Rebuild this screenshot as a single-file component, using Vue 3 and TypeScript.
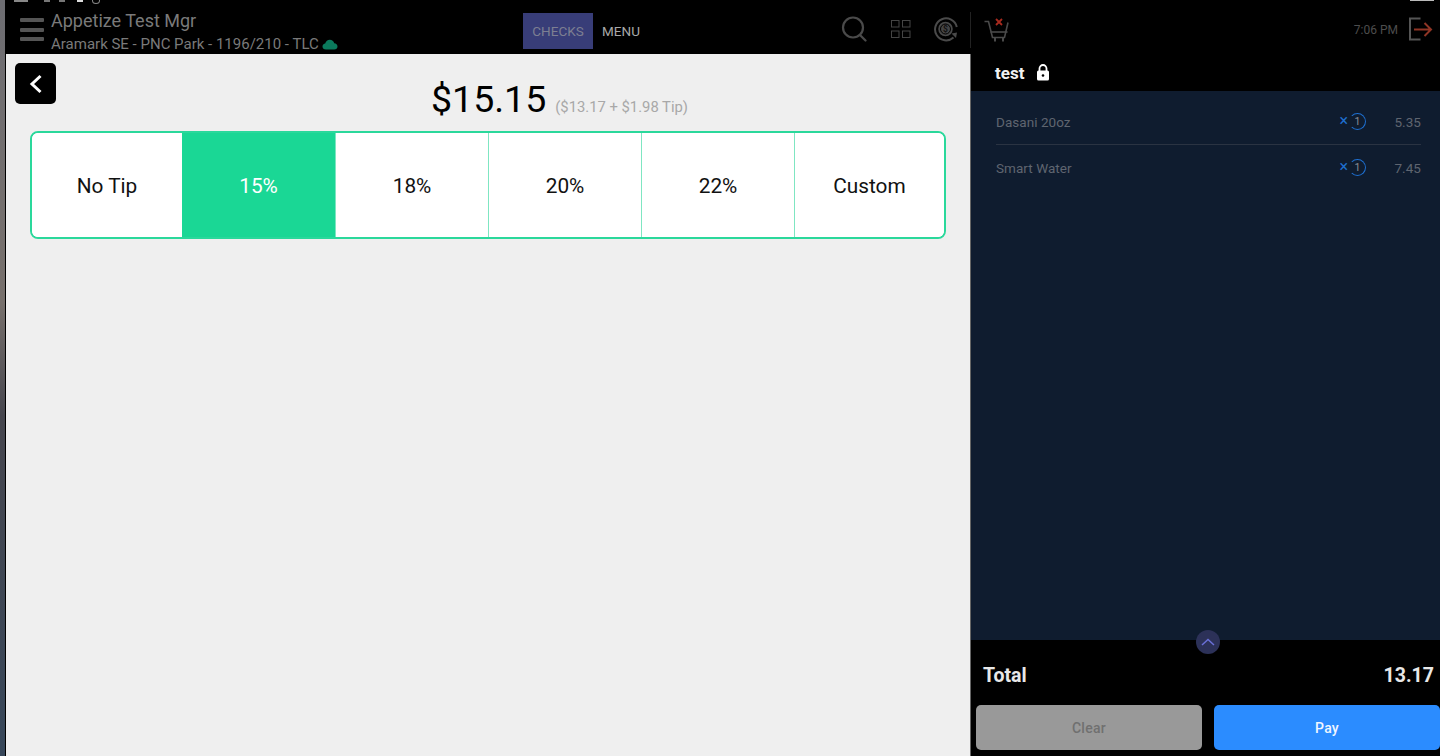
<script setup lang="ts">
const tips = ['No Tip', '15%', '18%', '20%', '22%', 'Custom']
const selectedTip = '15%'
const items = [
  { name: 'Dasani 20oz', qty: 1, price: '5.35' },
  { name: 'Smart Water', qty: 1, price: '7.45' }
]
</script>

<template>
  <div class="screen">
    <div class="wallpaper"></div>
    <div class="main">
      <header class="topbar">
        <div class="status-icons">
          <span class="dot clock"></span><span class="dot"></span><span class="dot"></span><span class="dot bright"></span><span class="dot ring"></span>
        </div>
        <div class="burger"><span></span><span></span><span></span></div>
        <div class="titles">
          <div class="title">Appetize Test Mgr</div>
          <div class="subtitle">
            Aramark SE - PNC Park - 1196/210 - TLC
            <svg class="cloud" width="16" height="11" viewBox="0 0 16 11">
              <path d="M4 10.5C1.8 10.5 0.5 9 0.5 7.4 0.5 5.8 1.7 4.6 3.2 4.5 3.8 2.2 5.6 0.8 7.8 0.8c2.2 0 3.9 1.4 4.4 3.4 1.9 0.1 3.3 1.5 3.3 3.2 0 1.7-1.4 3.1-3.3 3.1z" fill="#0b7a5c" />
            </svg>
          </div>
        </div>
        <nav class="tabs">
          <button class="tab tab-active">CHECKS</button>
          <button class="tab">MENU</button>
        </nav>
        <div class="tools">
          <svg width="26" height="26" viewBox="0 0 26 26" fill="none" stroke="#4a4a4a" stroke-width="2.2">
            <circle cx="12" cy="11.5" r="10" />
            <path d="M19 19l5.5 5.5" stroke-linecap="round" />
          </svg>
          <svg class="grid-icon" width="20" height="20" viewBox="0 0 20 20" fill="none" stroke="#444" stroke-width="1">
            <rect x="0.5" y="1.5" width="7.5" height="6.5" />
            <rect x="11.5" y="1.5" width="7.5" height="6.5" />
            <rect x="0.5" y="12" width="7.5" height="6.5" />
            <rect x="11.5" y="12" width="7.5" height="6.5" />
          </svg>
          <svg class="coin-icon" width="26" height="26" viewBox="0 0 26 26" fill="none">
            <path d="M20.5 21.5A11 11 0 1 1 23.8 11" stroke="#4a4a4a" stroke-width="2" />
            <circle cx="12.5" cy="13" r="6.5" fill="#444" stroke="#4a4a4a" stroke-width="1.5" />
            <circle cx="12.5" cy="13" r="5" stroke="#000" stroke-width="1" />
            <text x="12.5" y="16" text-anchor="middle" font-size="8.5" font-weight="700" fill="#111">$</text>
            <path d="M18.5 17.5l5.5-1-1 5.5z" fill="#4a4a4a" />
          </svg>
        </div>
      </header>

      <section class="content">
        <button class="back" aria-label="Back">
          <svg width="14" height="20" viewBox="0 0 14 20" fill="none" stroke="#fff" stroke-width="3">
            <path d="M11.5 2L3 10l8.5 8" />
          </svg>
        </button>
        <div class="amount">
          <span class="amount-total">$15.15</span>
          <span class="amount-detail">($13.17 + $1.98 Tip)</span>
        </div>
        <div class="tip-bar">
          <button
            v-for="tip in tips"
            :key="tip"
            :class="['tip', { 'tip-active': tip === selectedTip }]"
          >
            {{ tip }}
          </button>
        </div>
      </section>
    </div>

    <aside class="side">
      <div class="side-top">
        <svg class="cart" width="26" height="26" viewBox="0 0 26 26" fill="none" stroke="#4a4a4a" stroke-width="1.6">
          <path d="M0.5 5.5h4l4 16h12l3.500-15" />
          <path d="M6.500 16h17" />
          <path d="M11 21.500v4M19 21.500v4" stroke-width="2" />
          <path d="M12 3l6 6M18 3l-6 6" stroke="#a82a1e" stroke-width="1.800" />
        </svg>
        <span class="time">7:06 PM</span>
        <svg class="exit" width="26" height="24" viewBox="0 0 26 24" fill="none" stroke-width="2">
          <path d="M12.500 1.500H2v21h10.500" stroke="#555" />
          <path d="M6 12.500h17M16.500 6l6.500 6.500-6.500 6.500" stroke="#8f3525" />
        </svg>
        <span class="status-right"></span>
      </div>
      <div class="check-name">
        <span>test</span>
        <svg width="14" height="17" viewBox="0 0 14 17">
          <path d="M3.500 7V4.500a3.500 3.500 0 0 1 7 0V7" fill="none" stroke="#fff" stroke-width="1.800" />
          <rect x="1" y="6.500" width="12" height="10" rx="1.500" fill="#fff" />
          <circle cx="7" cy="11.500" r="1.300" fill="#000" />
        </svg>
      </div>
      <div class="items">
        <div v-for="item in items" :key="item.name" class="item">
          <span class="item-name">{{ item.name }}</span>
          <span class="item-x">×</span>
          <span class="item-qty">{{ item.qty }}</span>
          <span class="item-price">{{ item.price }}</span>
        </div>
      </div>
      <div class="footer">
        <button class="expand" aria-label="Expand">
          <svg width="14" height="8" viewBox="0 0 14 8" fill="none" stroke="#6a70d8" stroke-width="1.500">
            <path d="M1 7l6-5.500L13 7" />
          </svg>
        </button>
        <div class="total"><span>Total</span><span>13.17</span></div>
        <div class="actions">
          <button class="action clear">Clear</button>
          <button class="action pay">Pay</button>
        </div>
      </div>
    </aside>
  </div>
</template>

<style scoped>
.screen {
  display: flex;
  width: 1440px;
  height: 756px;
  overflow: hidden;
  font-family: Roboto, "Liberation Sans", sans-serif;
}
button {
  font-family: inherit;
  border: none;
  cursor: pointer;
}
.wallpaper {
  width: 5px;
  flex-shrink: 0;
  border-right: 1px solid #000;
  background: linear-gradient(180deg, #6d6d72 0%, #77706c 40%, #46464e 55%, #37475a 100%);
}
.main {
  width: 964px;
  display: flex;
  flex-direction: column;
  background: #efefef;
}
.topbar {
  position: relative;
  height: 54px;
  flex-shrink: 0;
  display: flex;
  align-items: flex-start;
  background: #000;
}
.status-icons {
  position: absolute;
  top: -3px;
  left: 8px;
  display: flex;
  gap: 9px;
}
.dot {
  width: 6px;
  height: 5px;
  background: #777;
}
.dot.clock {
  width: 14px;
  margin-right: 7px;
  background: #888;
}
.dot.bright {
  margin-left: 3px;
  background: #ddd;
}
.dot.ring {
  background: none;
  border: 1px solid #888;
  border-radius: 50%;
}
.burger {
  width: 24px;
  margin: 18px 0 0 14px;
  display: flex;
  flex-direction: column;
  gap: 5.5px;
}
.burger span {
  height: 4px;
  background: #555;
  border-radius: 1px;
}
.titles {
  margin: 11px 0 0 7px;
  width: 472px;
  color: #7a7a7a;
}
.title {
  font-size: 18px;
  line-height: 20px;
}
.subtitle {
  display: flex;
  align-items: center;
  gap: 3px;
  margin-top: 3px;
  font-size: 15px;
  line-height: 20px;
}
.tabs {
  display: flex;
  margin-top: 13px;
}
.tab {
  height: 36px;
  padding: 0;
  width: 70px;
  font-size: 13.5px;
  background: none;
  color: #a8a8a8;
}
.tab + .tab {
  width: 56px;
}
.tab-active {
  background: #383d78;
  color: #7d7f92;
}
.tools {
  display: flex;
  align-items: center;
  margin: 16px 0 0 192px;
}
.grid-icon {
  margin-left: 24px;
}
.coin-icon {
  margin-left: 22px;
}
.content {
  position: relative;
  flex: 1;
}
.back {
  position: absolute;
  top: 9px;
  left: 9px;
  width: 41px;
  height: 41px;
  display: flex;
  align-items: center;
  justify-content: center;
  background: #000;
  border-radius: 5px;
}
.amount {
  margin-top: 23px;
  height: 54px;
  padding-left: 425px;
  display: flex;
  align-items: baseline;
  gap: 9px;
  color: #000;
}
.amount-total {
  font-size: 37.5px;
  line-height: 44px;
  font-weight: 400;
}
.amount-detail {
  font-size: 14.8px;
  color: #a8a8a8;
}
.tip-bar {
  display: grid;
  grid-template-columns: 150px repeat(4, 153px) 1fr;
  box-sizing: border-box;
  width: 916px;
  height: 108px;
  margin-left: 24px;
  border: 2px solid #2ad89b;
  border-radius: 8px;
  overflow: hidden;
  background: #fff;
}
.tip {
  padding: 2px 0 0;
  font-size: 20.8px;
  color: #111;
  background: #fff;
  border-left: 1px solid #7fe6c2;
}
.tip:first-child {
  border-left: none;
}
.tip-active {
  color: #fff;
  background: #1ad795;
  border-left: none;
}
.side {
  width: 470px;
  flex-shrink: 0;
  display: flex;
  flex-direction: column;
  background: #000;
}
.side-top {
  position: relative;
  height: 54px;
  flex-shrink: 0;
  display: flex;
  align-items: center;
  padding: 6px 6px 0 14px;
  box-sizing: border-box;
}
.side-top::before {
  content: "";
  position: absolute;
  left: 0;
  top: 12px;
  bottom: 6px;
  width: 1px;
  background: #222;
}
.status-right {
  position: absolute;
  top: -3px;
  right: 6px;
  width: 24px;
  height: 4px;
  background: #bbb;
}
.cart {
  margin-top: -3px;
}
.time {
  margin-left: auto;
  margin-right: 10px;
  font-size: 12px;
  color: #4d4d4d;
}
.exit {
  margin-top: -3px;
}
.check-name {
  height: 37px;
  flex-shrink: 0;
  display: flex;
  align-items: center;
  gap: 12px;
  padding-left: 24px;
  box-sizing: border-box;
  border-left: 1px solid #666;
  color: #f2f2f2;
  font-size: 17px;
  font-weight: 700;
}
.items {
  flex: 1;
  padding: 8px 19px 0 25px;
  background: #0f1c2f;
  border-left: 1px solid #666;
}
.item {
  display: flex;
  align-items: center;
  height: 45px;
  font-size: 13.5px;
  color: #5f6570;
  letter-spacing: 0.05px;
}
.item + .item {
  border-top: 1px solid #2a3342;
}
.item-name {
  flex: 1;
}
.item-x {
  color: #1e6fd0;
  font-size: 16px;
  margin-right: 1px;
  margin-top: -3px;
}
.item-qty {
  width: 17px;
  height: 17px;
  box-sizing: border-box;
  border: 1px solid #1e6fd0;
  border-radius: 50%;
  border-left-color: transparent;
  text-align: center;
  font-size: 10.5px;
  line-height: 15px;
  color: #8a8f98;
}
.item-price {
  width: 55px;
  text-align: right;
}
.footer {
  position: relative;
  height: 116px;
  flex-shrink: 0;
  background: #000;
  border-left: 1px solid #666;
}
.expand {
  position: absolute;
  top: -10px;
  left: 225px;
  width: 24px;
  height: 24px;
  padding: 0;
  display: flex;
  align-items: center;
  justify-content: center;
  border-radius: 50%;
  background: #2c3158;
}
.total {
  display: flex;
  justify-content: space-between;
  padding: 25px 6px 0 12px;
  font-size: 19.5px;
  line-height: 22px;
  font-weight: 700;
  color: #e8e8e8;
}
.actions {
  display: flex;
  gap: 12px;
  margin-top: 18px;
  padding-left: 5px;
}
.action {
  width: 226px;
  height: 45px;
  padding: 0;
  border-radius: 5px;
  font-size: 14px;
  font-weight: 500;
  letter-spacing: 0.3px;
}
.clear {
  background: #999;
  color: #707070;
}
.pay {
  background: #2b8cff;
  color: #f0f6ff;
}
</style>

<style>
html,
body {
  margin: 0;
  background: #000;
}
</style>
